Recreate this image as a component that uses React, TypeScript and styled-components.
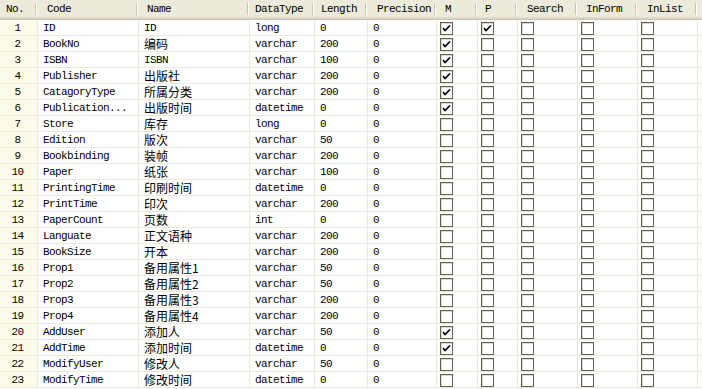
import styled, { createGlobalStyle } from "styled-components";

const GlobalStyle = createGlobalStyle`
  html, body {
    margin: 0;
    padding: 0;
    background: #fff;
  }
  * {
    box-sizing: border-box;
  }
`;

interface IColumn {
  title: string;
  width: number;
  headPad: number;
}

const columns: IColumn[] = [
  { title: "No.", width: 38, headPad: 6 },
  { title: "Code", width: 101, headPad: 9 },
  { title: "Name", width: 111, headPad: 8 },
  { title: "DataType", width: 65, headPad: 5 },
  { title: "Length", width: 53, headPad: 6 },
  { title: "Precision", width: 69, headPad: 9 },
  { title: "M", width: 41, headPad: 8 },
  { title: "P", width: 40, headPad: 7 },
  { title: "Search", width: 60, headPad: 9 },
  { title: "InForm", width: 60, headPad: 8 },
  { title: "InList", width: 60, headPad: 9 },
];

const template = columns.map((c) => `${c.width}px`).join(" ") + " 1fr";

type Field = [string, string, string, number, number, boolean, boolean];

const fields: Field[] = [
  ["ID", "ID", "long", 0, 0, true, true],
  ["BookNo", "编码", "varchar", 200, 0, true, false],
  ["ISBN", "ISBN", "varchar", 100, 0, true, false],
  ["Publisher", "出版社", "varchar", 200, 0, true, false],
  ["CatagoryType", "所属分类", "varchar", 200, 0, true, false],
  ["Publication...", "出版时间", "datetime", 0, 0, true, false],
  ["Store", "库存", "long", 0, 0, false, false],
  ["Edition", "版次", "varchar", 50, 0, false, false],
  ["Bookbinding", "装帧", "varchar", 200, 0, false, false],
  ["Paper", "纸张", "varchar", 100, 0, false, false],
  ["PrintingTime", "印刷时间", "datetime", 0, 0, false, false],
  ["PrintTime", "印次", "varchar", 200, 0, false, false],
  ["PaperCount", "页数", "int", 0, 0, false, false],
  ["Languate", "正文语种", "varchar", 200, 0, false, false],
  ["BookSize", "开本", "varchar", 200, 0, false, false],
  ["Prop1", "备用属性1", "varchar", 50, 0, false, false],
  ["Prop2", "备用属性2", "varchar", 50, 0, false, false],
  ["Prop3", "备用属性3", "varchar", 200, 0, false, false],
  ["Prop4", "备用属性4", "varchar", 200, 0, false, false],
  ["AddUser", "添加人", "varchar", 50, 0, true, false],
  ["AddTime", "添加时间", "datetime", 0, 0, true, false],
  ["ModifyUser", "修改人", "varchar", 50, 0, false, false],
  ["ModifyTime", "修改时间", "datetime", 0, 0, false, false],
];

const Grid = styled.div`
  width: 702px;
  height: 389px;
  background: #fff;
  font-family: "Liberation Mono", "Noto Sans CJK SC", monospace;
  font-size: 11px;
  letter-spacing: -0.6px;
  color: #000;
  overflow: hidden;
`;

const HeaderRow = styled.div`
  display: grid;
  grid-template-columns: ${template};
  height: 20px;
  background: #ebeadb;
  box-shadow: inset 0 -1px #cbc7b8, inset 0 -2px #d6d2c2, inset 0 -3px #e2decd;
`;

const HeadCell = styled.div<{ $pad: number }>`
  position: relative;
  display: flex;
  align-items: center;
  padding-left: ${(p) => p.$pad}px;
  padding-bottom: 2px;
  white-space: nowrap;
  overflow: hidden;

  &::after {
    content: "";
    position: absolute;
    right: 2px;
    top: 3px;
    bottom: 5px;
    width: 1px;
    background: #c7c5b2;
    box-shadow: 1px 0 #fff;
  }
`;

const HeadFill = styled.div``;

const Row = styled.div`
  display: grid;
  grid-template-columns: ${template};
  height: 16px;
`;

const Cell = styled.div<{ $cjk?: boolean }>`
  display: flex;
  align-items: center;
  padding-left: 5px;
  border-right: 1px solid #ebe9da;
  border-bottom: 1px solid #ebe9da;
  white-space: nowrap;
  overflow: hidden;
  font-family: ${(p) =>
    p.$cjk
      ? '"Noto Sans CJK SC", sans-serif'
      : '"Liberation Mono", "Noto Sans CJK SC", monospace'};
  font-size: ${(p) => (p.$cjk ? "12px" : "11px")};
  letter-spacing: ${(p) => (p.$cjk ? "0" : "-0.6px")};
`;

const NumCell = styled(Cell)`
  justify-content: center;
  padding-left: 0;
  padding-right: 2px;
  background: #fdfbe7;
`;

const CheckCell = styled(Cell)`
  padding-left: 3px;
  padding-top: 1px;
`;

const Box = styled.span`
  display: inline-flex;
  align-items: center;
  justify-content: center;
  width: 13px;
  height: 13px;
  background: #fff;
  border: 1px solid #5f5e52;
  box-shadow: inset 1px 1px #dcdbd0;
`;

const Fill = styled.div`
  border-bottom: 1px solid #ebe9da;
`;

function Check({ on }: { on: boolean }) {
  return (
    <Box>
      {on && (
        <svg width="9" height="9" viewBox="0 0 9 9">
          <polyline
            points="1,4 3,6.5 8,1.5"
            fill="none"
            stroke="#000"
            strokeWidth="1.6"
          />
        </svg>
      )}
    </Box>
  );
}

function App() {
  return (
    <>
      <GlobalStyle />
      <Grid>
        <HeaderRow>
          {columns.map((c) => (
            <HeadCell key={c.title} $pad={c.headPad}>
              {c.title}
            </HeadCell>
          ))}
          <HeadFill />
        </HeaderRow>
        {fields.map(([code, name, type, len, prec, m, p], i) => (
          <Row key={code}>
            <NumCell>{i + 1}</NumCell>
            <Cell>{code}</Cell>
            <Cell $cjk={/[^\x00-\x7f]/.test(name)}>{name}</Cell>
            <Cell>{type}</Cell>
            <Cell>{len}</Cell>
            <Cell>{prec}</Cell>
            <CheckCell>
              <Check on={m} />
            </CheckCell>
            <CheckCell>
              <Check on={p} />
            </CheckCell>
            <CheckCell>
              <Check on={false} />
            </CheckCell>
            <CheckCell>
              <Check on={false} />
            </CheckCell>
            <CheckCell>
              <Check on={false} />
            </CheckCell>
            <Fill />
          </Row>
        ))}
      </Grid>
    </>
  );
}

export default App;
